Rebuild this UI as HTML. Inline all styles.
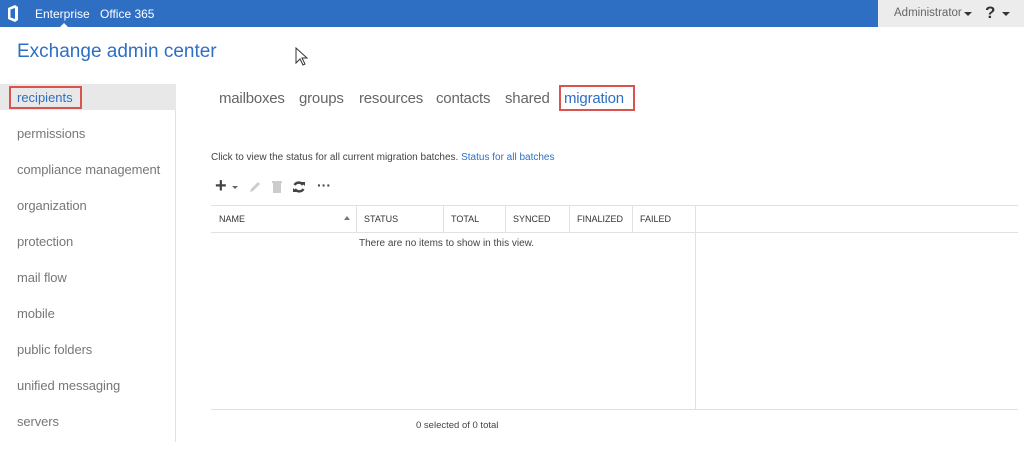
<!DOCTYPE html>
<html><head><meta charset="utf-8"><style>
body{margin:0;width:1024px;height:452px;background:#fff;font-family:"Liberation Sans",sans-serif;position:relative;overflow:hidden}
.a{position:absolute;white-space:nowrap}
.top{left:0;top:0;width:878px;height:27px;background:#2e6fc4}
.topr{left:878px;top:0;width:146px;height:27px;background:#ececec}
.nav{font-size:13px;color:#777;letter-spacing:-0.1px}
.tab{font-size:15px;color:#666;top:90px;letter-spacing:-0.2px}
.th{font-size:9px;color:#333;top:214px}
.hl{background:#e1e1e1;height:1px}
.vl{background:#e1e1e1;width:1px}
</style></head><body>
<div class="a top"></div><div class="a topr"></div>
<svg class="a" style="left:7px;top:5px" width="12" height="17" viewBox="0 0 12 17"><path d="M1 3 L8 0 L11 2 L11 15 L8 17 L1 14 Z M3.5 4.5 L3.5 12.5 L8 14 L8 3 Z" fill="#fff" fill-rule="evenodd"/></svg>
<div class="a" style="left:35px;top:7px;font-size:12px;color:#fff">Enterprise</div>
<div class="a" style="left:60px;top:23px;width:0;height:0;border-left:4px solid transparent;border-right:4px solid transparent;border-bottom:4px solid #fff"></div>
<div class="a" style="left:100px;top:7px;font-size:12px;color:#fff">Office 365</div>
<div class="a" style="left:894px;top:7px;font-size:11.5px;color:#666">Administrator</div>
<div class="a" style="left:964px;top:12px;border-left:4px solid transparent;border-right:4px solid transparent;border-top:4px solid #333;width:0;height:0"></div>
<div class="a" style="left:985px;top:3px;font-size:17px;font-weight:bold;color:#333">?</div>
<div class="a" style="left:1002px;top:12px;border-left:4px solid transparent;border-right:4px solid transparent;border-top:4px solid #333;width:0;height:0"></div>
<div class="a" style="left:17px;top:41px;font-size:19px;color:#2e6fc4">Exchange admin center</div>
<svg class="a" style="left:295px;top:47px" width="13" height="20"><path d="M1 1 L1 16 L5 12 L8 18 L10 17 L7 11 L12 11 Z" fill="#fff" stroke="#333" stroke-width="1"/></svg>
<div class="a" style="left:0;top:84px;width:176px;height:26px;background:#e8e8e8"></div>
<div class="a vl" style="left:175px;top:110px;height:332px"></div>
<div class="a" style="left:9px;top:86px;width:73px;height:23px;border:2px solid #d9534f;box-sizing:border-box"></div>
<div class="a" style="left:17px;top:90px;font-size:13px;color:#2e6fc4">recipients</div>
<div class="a nav" style="left:17px;top:126px">permissions</div>
<div class="a nav" style="left:17px;top:162px">compliance management</div>
<div class="a nav" style="left:17px;top:198px">organization</div>
<div class="a nav" style="left:17px;top:234px">protection</div>
<div class="a nav" style="left:17px;top:270px">mail flow</div>
<div class="a nav" style="left:17px;top:306px">mobile</div>
<div class="a nav" style="left:17px;top:342px">public folders</div>
<div class="a nav" style="left:17px;top:378px">unified messaging</div>
<div class="a nav" style="left:17px;top:414px">servers</div>
<div class="a tab" style="left:219px">mailboxes</div>
<div class="a tab" style="left:299px">groups</div>
<div class="a tab" style="left:359px">resources</div>
<div class="a tab" style="left:436px">contacts</div>
<div class="a tab" style="left:505px">shared</div>
<div class="a" style="left:559px;top:85px;width:76px;height:26px;border:2px solid #d9534f;box-sizing:border-box"></div>
<div class="a tab" style="left:564px;color:#2e6fc4">migration</div>
<div class="a" style="left:211px;top:152px;font-size:10px;color:#444">Click to view the status for all current migration batches. <span style="color:#2e6fc4">Status for all batches</span></div>
<div class="a" style="left:215px;top:176px;font-size:20px;font-weight:bold;color:#444;line-height:20px">+</div>
<div class="a" style="left:232px;top:186px;border-left:3px solid transparent;border-right:3px solid transparent;border-top:3px solid #666;width:0;height:0"></div>
<svg class="a" style="left:248px;top:180px" width="14" height="14"><path d="M2 12 L3 9 L10 2 L12 4 L5 11 Z" fill="#ccc"/></svg>
<svg class="a" style="left:271px;top:180px" width="12" height="14"><rect x="2" y="3" width="8" height="10" fill="#ccc"/><rect x="1" y="1" width="10" height="2" fill="#ccc"/></svg>
<svg class="a" style="left:292px;top:180px" width="14" height="14"><path d="M11 5 A5 5 0 0 0 2.5 5 M3 9 A5 5 0 0 0 11.5 9" stroke="#444" stroke-width="2.4" fill="none"/><path d="M9 2 L13 2 L13 6 Z M5 12 L1 12 L1 8 Z" fill="#444"/></svg>
<div class="a" style="left:317px;top:177px;font-size:14px;font-weight:bold;color:#444">···</div>
<div class="a hl" style="left:211px;top:205px;width:807px"></div>
<div class="a hl" style="left:211px;top:232px;width:807px"></div>
<div class="a hl" style="left:211px;top:409px;width:807px"></div>
<div class="a vl" style="left:356px;top:206px;height:26px"></div>
<div class="a vl" style="left:443px;top:206px;height:26px"></div>
<div class="a vl" style="left:505px;top:206px;height:26px"></div>
<div class="a vl" style="left:569px;top:206px;height:26px"></div>
<div class="a vl" style="left:632px;top:206px;height:26px"></div>
<div class="a vl" style="left:695px;top:206px;height:203px"></div>
<div class="a th" style="left:219px">NAME</div>
<div class="a" style="left:344px;top:216px;border-left:3px solid transparent;border-right:3px solid transparent;border-bottom:4px solid #777;width:0;height:0"></div>
<div class="a th" style="left:364px">STATUS</div>
<div class="a th" style="left:451px">TOTAL</div>
<div class="a th" style="left:513px">SYNCED</div>
<div class="a th" style="left:577px">FINALIZED</div>
<div class="a th" style="left:640px">FAILED</div>
<div class="a" style="left:359px;top:238px;font-size:10px;color:#444">There are no items to show in this view.</div>
<div class="a" style="left:416px;top:420px;font-size:9.5px;color:#444">0 selected of 0 total</div>
</body></html>
